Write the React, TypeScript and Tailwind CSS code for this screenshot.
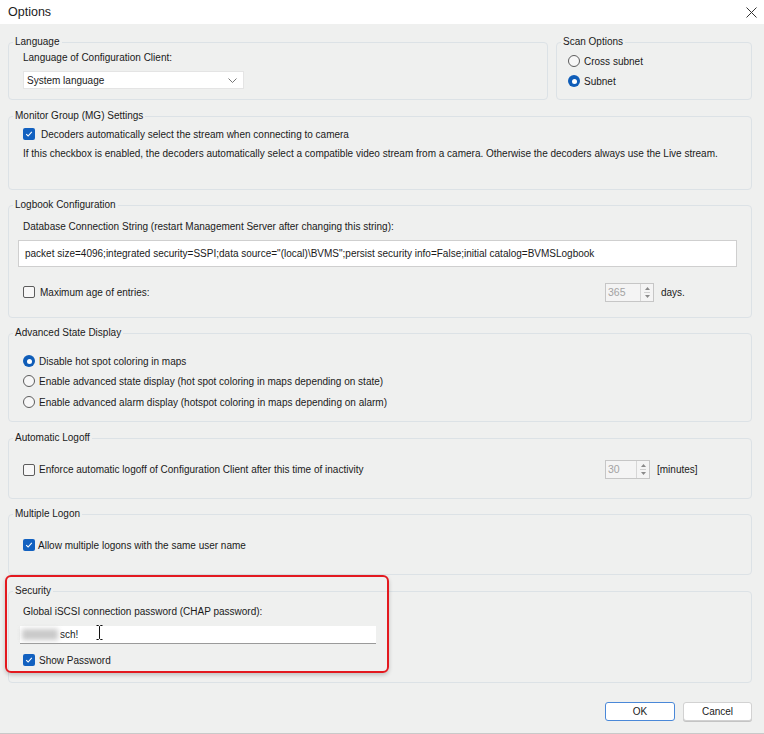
import React from 'react';

const font = { fontFamily: '"Liberation Sans", Arial, sans-serif' };

const Check = ({ checked }: { checked?: boolean }) =>
  checked ? (
    <span className="w-[12px] h-[12px] rounded-[2px] bg-[#1261c0] flex items-center justify-center shrink-0">
      <svg width="8" height="8" viewBox="0 0 8 8">
        <path d="M1.2 4.2 L3.1 6 L6.8 1.9" fill="none" stroke="#ffffff" strokeWidth="1.1" />
      </svg>
    </span>
  ) : (
    <span className="w-[12px] h-[12px] rounded-[2px] border border-[#5c5c5c] bg-[#f7f7f7] shrink-0" />
  );

const Radio = ({ checked }: { checked?: boolean }) =>
  checked ? (
    <span className="w-[12px] h-[12px] rounded-full bg-[#0f5db8] flex items-center justify-center shrink-0">
      <span className="w-[5px] h-[5px] rounded-full bg-white" />
    </span>
  ) : (
    <span className="w-[12px] h-[12px] rounded-full border border-[#5c5c5c] bg-[#f7f7f7] shrink-0" />
  );

const Group = ({ title, className, children }: { title: string; className: string; children: React.ReactNode }) => (
  <fieldset className={`border border-[#dce2e6] rounded-[4px] ${className}`}>
    <legend className="ml-[4px] px-[2px] leading-[14px] text-[#1a1a1a]">{title}</legend>
    {children}
  </fieldset>
);

const Spin = ({ value, w }: { value: string; w: string }) => (
  <div className={`${w} h-[19px] border border-[#c6c6c6] bg-[#f4f4f4] flex`}>
    <span className="flex-1 pl-[2px] text-[#a3a3a3] leading-[17px] text-[10.5px]">{value}</span>
    <div className="w-[13px] border-l border-[#d6d6d6] flex flex-col items-center justify-center gap-[2px]">
      <svg width="5" height="3" viewBox="0 0 5 3"><path d="M0 3 L2.5 0 L5 3Z" fill="#8a8a8a" /></svg>
      <span className="w-[6px] h-px bg-[#d0d0d0]" />
      <svg width="5" height="3" viewBox="0 0 5 3"><path d="M0 0 L2.5 3 L5 0Z" fill="#8a8a8a" /></svg>
    </div>
  </div>
);

export default function App() {
  return (
    <div className="w-[764px] h-[734px] bg-[#eff0ef] relative text-[10px] text-[#1a1a1a] overflow-hidden border-b border-[#c9c9c9]" style={font}>
      {/* title bar */}
      <div className="h-[24px] bg-white flex items-center justify-between pl-[8px] pr-[7px]">
        <span className="text-[12.5px] text-[#1c1c1c]">Options</span>
        <svg width="11" height="11" viewBox="0 0 11 11">
          <path d="M0.5 0.5 L10.5 10.5 M10.5 0.5 L0.5 10.5" stroke="#333" strokeWidth="1" />
        </svg>
      </div>

      <div className="pl-[8px] pr-[12px] pt-[11px] flex flex-col">
        <div className="flex gap-[8px]">
          <Group title="Language" className="w-[540px] h-[65px]">
            <div className="pl-[14px] pt-[1.5px] flex flex-col">
              <span className="leading-[13px]">Language of Configuration Client:</span>
              <div className="mt-[7.5px] w-[221px] h-[18px] bg-white border border-[#e4e4e4] flex items-center justify-between pl-[3px] pr-[6px]">
                <span>System language</span>
                <svg width="9" height="5" viewBox="0 0 9 5"><path d="M0.5 0.5 L4.5 4.5 L8.5 0.5" fill="none" stroke="#666" strokeWidth="0.9" /></svg>
              </div>
            </div>
          </Group>
          <Group title="Scan Options" className="flex-1 h-[65px]">
            <div className="pl-[11px] pt-[4px] flex flex-col gap-[4px]">
              <div className="h-[16px] flex items-center gap-[4px]"><Radio /><span>Cross subnet</span></div>
              <div className="h-[16px] flex items-center gap-[4px]"><Radio checked /><span>Subnet</span></div>
            </div>
          </Group>
        </div>

        <Group title="Monitor Group (MG) Settings" className="mt-[9px] h-[81px]">
          <div className="pl-[14px] pt-[3px] flex flex-col">
            <div className="h-[16px] flex items-center gap-[6px]"><Check checked /><span>Decoders automatically select the stream when connecting to camera</span></div>
            <span className="mt-[4.5px] leading-[13px]">If this checkbox is enabled, the decoders automatically select a compatible video stream from a camera. Otherwise the decoders always use the Live stream.</span>
          </div>
        </Group>

        <Group title="Logbook Configuration" className="mt-[8px] h-[120px]">
          <div className="pl-[14px] pt-[7.5px] pr-[14px] flex flex-col">
            <span className="leading-[13px]">Database Connection String (restart Management Server after changing this string):</span>
            <div className="mt-[7.5px] -ml-[5px] h-[27px] bg-white border border-[#cfcfcf] flex items-center pl-[6px]">
              packet size=4096;integrated security=SSPI;data source="(local)\BVMS";persist security info=False;initial catalog=BVMSLogbook
            </div>
            <div className="mt-[15px] h-[20px] flex items-center">
              <div className="w-[582px] flex items-center gap-[5px]"><Check /><span>Maximum age of entries:</span></div>
              <Spin value="365" w="w-[49px]" />
              <span className="ml-[7px]">days.</span>
            </div>
          </div>
        </Group>

        <Group title="Advanced State Display" className="mt-[8px] h-[96px]">
          <div className="pl-[14px] pt-[13px] flex flex-col">
            <div className="h-[16px] flex items-center gap-[4px]"><Radio checked /><span>Disable hot spot coloring in maps</span></div>
            <div className="mt-[4px] h-[16px] flex items-center gap-[4px]"><Radio /><span>Enable advanced state display (hot spot coloring in maps depending on state)</span></div>
            <div className="mt-[5px] h-[16px] flex items-center gap-[4px]"><Radio /><span>Enable advanced alarm display (hotspot coloring in maps depending on alarm)</span></div>
          </div>
        </Group>

        <Group title="Automatic Logoff" className="mt-[9px] h-[68px]">
          <div className="pl-[14px] pt-[15px] flex flex-col">
            <div className="h-[19px] flex items-center">
              <div className="w-[582px] flex items-center gap-[4px]"><Check /><span>Enforce automatic logoff of Configuration Client after this time of inactivity</span></div>
              <Spin value="30" w="w-[45px]" />
              <span className="ml-[7px]">[minutes]</span>
            </div>
          </div>
        </Group>

        <Group title="Multiple Logon" className="mt-[8px] h-[68px]">
          <div className="pl-[14px] pt-[16px] flex flex-col">
            <div className="h-[16px] flex items-center gap-[3px]"><Check checked /><span>Allow multiple logons with the same user name</span></div>
          </div>
        </Group>

        <Group title="Security" className="mt-[9px] h-[99px]">
          <div className="pl-[14px] pt-[6.5px] flex flex-col">
            <span className="leading-[13px]">Global iSCSI connection password (CHAP password):</span>
            <div className="mt-[8.5px] -ml-[3px] w-[356px] h-[18px] bg-white border-b border-[#9a9a9a] flex items-center pl-[2px]">
              <span className="w-[36px] h-[11px] bg-[#c9c9c9] blur-[2.5px]" />
              <span className="ml-[2px]">sch!</span>
            </div>
            <div className="mt-[8px] h-[16px] flex items-center gap-[4px]"><Check checked /><span>Show Password</span></div>
          </div>
        </Group>

        <div className="mt-[19px] flex justify-end gap-[8px]">
          <button className="w-[70px] h-[19px] bg-white border-[1.5px] border-[#4a88d8] rounded-[3px] text-[10px] leading-none">OK</button>
          <button className="w-[69px] h-[19px] bg-white border border-[#d2d2d2] rounded-[3px] text-[10px] leading-none shadow-[0_1px_0_#c4c4c4]">Cancel</button>
        </div>
      </div>

      {/* I-beam text cursor */}
      <svg className="absolute left-[96px] top-[625px]" width="7" height="15" viewBox="0 0 7 15">
        <path d="M0.5 0.5 H2.5 L3.5 1.5 L4.5 0.5 H6.5 M3.5 1.5 V13.5 M0.5 14.5 H2.5 L3.5 13.5 L4.5 14.5 H6.5" fill="none" stroke="#111" strokeWidth="1" />
      </svg>

      {/* red highlight */}
      <div className="absolute left-[5px] top-[575px] w-[384px] h-[98px] border-2 border-[#e3191f] rounded-[6px] shadow-[0_2px_4px_rgba(0,0,0,0.2)]" />
    </div>
  );
}
